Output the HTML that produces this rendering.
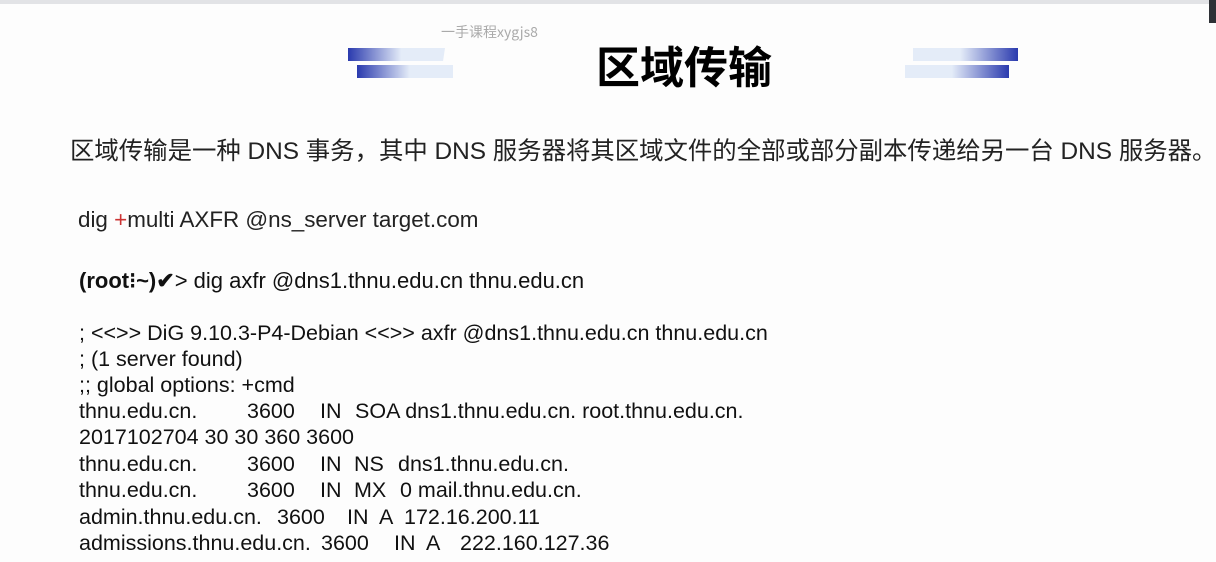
<!DOCTYPE html>
<html><head><meta charset="utf-8"><style>
body{margin:0;width:1216px;height:562px;background:#fdfdfd;position:relative;overflow:hidden;font-family:"Liberation Sans","Noto Sans CJK SC",sans-serif;color:#111}
.l{position:absolute;white-space:pre;font-size:21.5px;line-height:24px}
.s{position:absolute}
.bar{position:absolute;height:13px}
</style></head><body>
<div style="position:absolute;left:0;top:0;width:1216px;height:4px;background:#e2e3e6"></div>
<div style="position:absolute;left:1209px;top:0;width:7px;height:23px;background:#2e3136"></div>
<div style="position:absolute;left:441px;top:22px;font-size:14px;color:#aaa;font-family:'Noto Sans CJK SC',sans-serif">一手课程xygjs8</div>
<div class="bar" style="left:348px;top:48px;width:97px;background:linear-gradient(90deg,#2a3aae,#e4ecf8 55%,#e4ecf8);clip-path:polygon(0 0,100% 0,98% 100%,0 100%)"></div>
<div class="bar" style="left:357px;top:65px;width:96px;background:linear-gradient(90deg,#2a3aae,#e4ecf8 55%,#e4ecf8)"></div>
<div class="bar" style="left:913px;top:48px;width:105px;background:linear-gradient(270deg,#2a3aae,#e4ecf8 55%,#e4ecf8)"></div>
<div class="bar" style="left:905px;top:65px;width:104px;background:linear-gradient(270deg,#2a3aae,#e4ecf8 55%,#e4ecf8)"></div>
<div style="position:absolute;left:596px;top:36px;font-size:44px;font-weight:bold;color:#000;font-family:'Noto Sans CJK SC',sans-serif;line-height:56px">区域传输</div>
<div style="position:absolute;left:70px;top:136px;font-size:24.4px;line-height:32px;color:#222;white-space:nowrap">区域传输是一种 DNS 事务，其中 DNS 服务器将其区域文件的全部或部分副本传递给另一台 DNS 服务器。</div>
<div class="l" style="left:78px;top:208px;color:#222;font-size:22.4px">dig <span style="color:#c33">+</span>multi AXFR @ns_server target.com</div>
<div class="l" style="left:79px;top:269px;font-size:22px"><b>(root⁝~)✔</b>&gt; dig axfr @dns1.thnu.edu.cn thnu.edu.cn</div>
<div class="l" style="left:79px;top:321px">; &lt;&lt;&gt;&gt; DiG 9.10.3-P4-Debian &lt;&lt;&gt;&gt; axfr @dns1.thnu.edu.cn thnu.edu.cn</div>
<div class="l" style="left:79px;top:347px">; (1 server found)</div>
<div class="l" style="left:79px;top:373px">;; global options: +cmd</div>
<div class="l" style="left:79px;top:399px;width:900px">thnu.edu.cn.<span class="s" style="left:168px">3600</span><span class="s" style="left:241px">IN</span><span class="s" style="left:276px">SOA dns1.thnu.edu.cn. root.thnu.edu.cn.</span></div>
<div class="l" style="left:79px;top:425px">2017102704 30 30 360 3600</div>
<div class="l" style="left:79px;top:452px;width:900px">thnu.edu.cn.<span class="s" style="left:168px">3600</span><span class="s" style="left:241px">IN</span><span class="s" style="left:275px">NS</span><span class="s" style="left:319px">dns1.thnu.edu.cn.</span></div>
<div class="l" style="left:79px;top:478px;width:900px">thnu.edu.cn.<span class="s" style="left:168px">3600</span><span class="s" style="left:241px">IN</span><span class="s" style="left:275px">MX</span><span class="s" style="left:321px">0 mail.thnu.edu.cn.</span></div>
<div class="l" style="left:79px;top:505px;width:900px">admin.thnu.edu.cn.<span class="s" style="left:198px">3600</span><span class="s" style="left:268px">IN</span><span class="s" style="left:300px">A</span><span class="s" style="left:325px">172.16.200.11</span></div>
<div class="l" style="left:79px;top:531px;width:900px">admissions.thnu.edu.cn.<span class="s" style="left:242px">3600</span><span class="s" style="left:315px">IN</span><span class="s" style="left:347px">A</span><span class="s" style="left:381px">222.160.127.36</span></div>
</body></html>
